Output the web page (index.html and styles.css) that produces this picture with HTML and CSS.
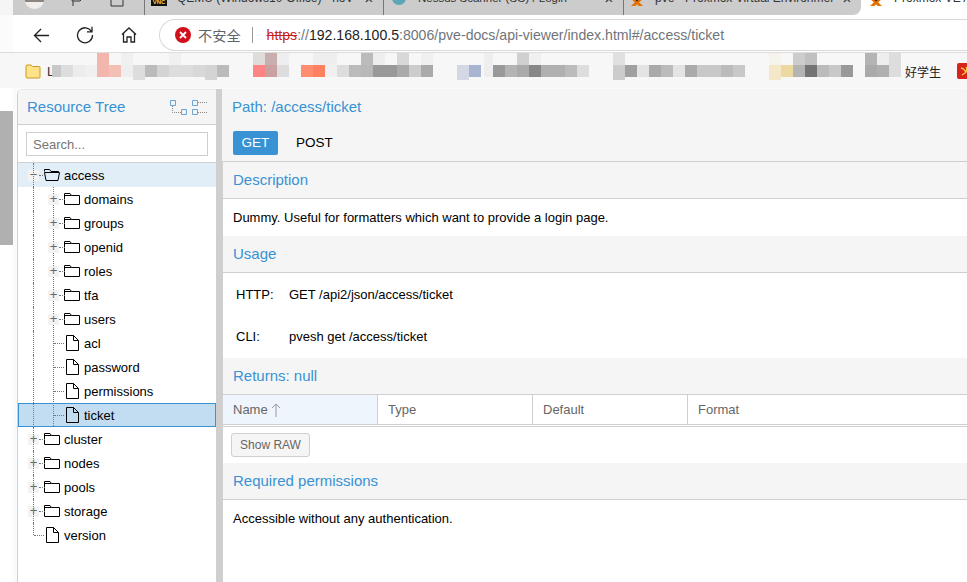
FILE: index.html
```html
<!DOCTYPE html>
<html lang="zh">
<head>
<meta charset="utf-8">
<title>Proxmox VE API Viewer</title>
<link rel="stylesheet" href="styles.css">
</head>
<body>
<svg class="defs" width="0" height="0" aria-hidden="true">
  <symbol id="folder" viewBox="0 0 16 12"><path d="M.5 11.5V.5h5.5l1.5 2h8v9z M.5 2.5h7" fill="none" stroke="#000"/></symbol>
  <symbol id="folder-open" viewBox="0 0 16 12"><path d="M.5 2.5V.5h5l1.5 2h7.5v1 M.5 3.5h15l-1.5 8H2z" fill="none" stroke="#000"/></symbol>
  <symbol id="page" viewBox="0 0 13 16"><path d="M.5.5h7l5 5v10H.5z M7.5.5v5h5" fill="none" stroke="#000"/></symbol>
</svg>

<header class="browser">
  <div class="tabstrip">
    <div class="strip-shade"></div>
    <div class="tabs">
      <span class="tab-icon avatar"></span>
      <svg class="tab-tool tool-a" viewBox="0 0 16 15"><path d="M2 0v6l4 3h7l2-2V0M6 9v5" fill="none" stroke="#333"/></svg>
      <svg class="tab-tool tool-b" viewBox="0 0 16 15"><path d="M1 5v9h12V0H4v5z" fill="none" stroke="#333"/></svg>
      <div class="tab tab-qemu"><span class="vnc">VNC</span><span class="tab-title">QEMU (Windows10-Office) - noV</span><span class="tab-x">×</span></div>
      <div class="tab tab-nessus"><span class="globe"></span><span class="tab-title">Nessus Scanner (SC) / Login</span><span class="tab-x">×</span></div>
      <div class="tab tab-pve"><svg class="px" viewBox="0 0 16 6"><path d="M-1-6 13 7M17-6 3 7" stroke="#e57000" stroke-width="3" fill="none"/><path d="M5-3l3 3 3-3" stroke="#222" stroke-width="2" fill="none"/></svg><span class="tab-title">pve - Proxmox Virtual Environmer</span><span class="tab-x">×</span></div>
      <div class="tab tab-active"><svg class="px" viewBox="0 0 16 6"><path d="M-1-6 13 7M17-6 3 7" stroke="#e57000" stroke-width="3" fill="none"/><path d="M5-3l3 3 3-3" stroke="#222" stroke-width="2" fill="none"/></svg><span class="tab-title">Proxmox VE A</span></div>
    </div>
  </div>
  <div class="toolbar">
    <svg class="tool back" viewBox="0 0 18 16"><path d="M17 8H1.500M8.500 1 1.500 8l7 7" fill="none" stroke="#222" stroke-width="1.400"/></svg>
    <svg class="tool reload" viewBox="0 0 18 18"><path d="M15.500 5.500A7.500 7.500 0 1 0 16.500 9M16 .8v5h-5" fill="none" stroke="#222" stroke-width="1.300"/></svg>
    <svg class="tool home" viewBox="0 0 16 16"><path d="M1 7.500 8 1l7 6.500M2.500 6.500v8.500H6V10h4v5h3.500V6.500" fill="none" stroke="#222" stroke-width="1.300"/></svg>
    <div class="omnibox">
      <svg class="warn" viewBox="0 0 16 16"><circle cx="8" cy="8" r="8" fill="#d20f1c"/><path d="m5 5 6 6m0-6-6 6" stroke="#fff" stroke-width="1.800"/></svg>
      <span class="insecure">不安全</span>
      <span class="sep"></span>
      <span class="url"><span class="https">https</span><span class="dim">://</span>192.168.100.5<span class="dim">:8006/pve-docs/api-viewer/index.html#/access/ticket</span></span>
    </div>
  </div>
  <div class="bookmarks">
    <svg class="bm-folder" viewBox="0 0 16 16"><path d="M1 3q0-1 1-1h4l1.500 1.500H14q1 0 1 1V14q0 1-1 1H2q-1 0-1-1z" fill="#fde28a" stroke="#c99a1e"/></svg>
    <span class="bm-letter">L</span>
    <svg class="mosaic" viewBox="0 0 967 36" width="967" height="36" aria-hidden="true">
      <g transform="translate(0,-52)">
        <rect x="52" y="65" width="9" height="12" fill="#c8c8c8"/><rect x="61" y="65" width="12" height="12" fill="#ddd"/><rect x="73" y="65" width="12" height="12" fill="#ececec"/><rect x="85" y="65" width="12" height="12" fill="#f0f0f0"/><rect x="97" y="65" width="12" height="12" fill="#f2b6ac"/><rect x="109" y="65" width="12" height="12" fill="#f4c0b4"/><rect x="121" y="65" width="12" height="12" fill="#eee"/><rect x="133" y="65" width="12" height="15" fill="#ddd"/><rect x="145" y="65" width="12" height="12" fill="#bbb"/><rect x="157" y="65" width="12" height="12" fill="#d4d4d4"/><rect x="169" y="65" width="12" height="12" fill="#ddd"/><rect x="181" y="65" width="12" height="12" fill="#ddd"/><rect x="193" y="65" width="12" height="12" fill="#d8d8d8"/><rect x="205" y="65" width="12" height="15" fill="#d4d4d4"/><rect x="217" y="65" width="12" height="12" fill="#bbb"/>
        <rect x="97" y="53" width="12" height="12" fill="#f2b6ac"/><rect x="121" y="53" width="12" height="12" fill="#f0f0f0"/><rect x="169" y="53" width="12" height="12" fill="#f0f0f0"/>
        <rect x="253" y="65" width="12" height="12" fill="#ff8585"/><rect x="265" y="65" width="12" height="12" fill="#cba0a0"/><rect x="277" y="65" width="12" height="12" fill="#ddd"/><rect x="301" y="65" width="12" height="12" fill="#ff8d70"/><rect x="313" y="65" width="12" height="12" fill="#ff8060"/><rect x="325" y="65" width="12" height="12" fill="#f0f0f0"/><rect x="337" y="65" width="12" height="12" fill="#ddd"/><rect x="349" y="65" width="12" height="12" fill="#bbb"/><rect x="361" y="65" width="12" height="12" fill="#b8b8b8"/><rect x="373" y="65" width="12" height="12" fill="#999"/><rect x="385" y="65" width="12" height="12" fill="#999"/><rect x="397" y="65" width="12" height="12" fill="#aaa"/><rect x="409" y="65" width="12" height="12" fill="#ccc"/><rect x="421" y="65" width="12" height="12" fill="#aaa"/><rect x="457" y="65" width="12" height="15" fill="#d4d8e4"/><rect x="469" y="65" width="12" height="12" fill="#a8b4d0"/>
        <rect x="253" y="53" width="12" height="12" fill="#e0dcdc"/><rect x="265" y="53" width="12" height="12" fill="#c8aeae"/><rect x="277" y="53" width="12" height="12" fill="#eee"/><rect x="313" y="53" width="24" height="12" fill="#eee"/><rect x="361" y="53" width="12" height="12" fill="#bbb"/><rect x="373" y="53" width="12" height="12" fill="#eee"/><rect x="397" y="53" width="12" height="12" fill="#d8d8d8"/><rect x="421" y="53" width="12" height="12" fill="#f0f0f0"/>
        <rect x="493" y="65" width="12" height="12" fill="#999"/><rect x="505" y="65" width="12" height="12" fill="#b4b4b4"/><rect x="517" y="65" width="12" height="12" fill="#aaa"/><rect x="529" y="65" width="12" height="12" fill="#888"/><rect x="541" y="65" width="24" height="12" fill="#b0b0b0"/><rect x="565" y="65" width="12" height="12" fill="#bbb"/><rect x="577" y="65" width="12" height="12" fill="#ddd"/>
        <rect x="484" y="53" width="9" height="24" fill="#eee"/><rect x="517" y="53" width="12" height="12" fill="#d0d0d0"/><rect x="529" y="53" width="12" height="12" fill="#f0f0f0"/>
        <rect x="613" y="53" width="12" height="12" fill="#e0e0e0"/><rect x="613" y="65" width="12" height="15" fill="#ccc"/><rect x="625" y="65" width="12" height="12" fill="#a0a0a0"/><rect x="637" y="65" width="12" height="12" fill="#e4e4e4"/><rect x="649" y="65" width="12" height="12" fill="#aaa"/><rect x="661" y="65" width="12" height="12" fill="#bbb"/><rect x="673" y="65" width="12" height="12" fill="#e4e4e4"/><rect x="685" y="65" width="12" height="12" fill="#aaa"/><rect x="697" y="65" width="24" height="12" fill="#c8c8c8"/><rect x="721" y="65" width="12" height="12" fill="#bbb"/><rect x="733" y="65" width="12" height="12" fill="#c8c8c8"/>
        <rect x="769" y="53" width="12" height="12" fill="#f6f3ea"/><rect x="769" y="65" width="12" height="15" fill="#f4e8c8"/><rect x="781" y="65" width="12" height="12" fill="#edd9a0"/><rect x="793" y="65" width="12" height="12" fill="#b4b4b4"/><rect x="805" y="65" width="12" height="12" fill="#747474"/><rect x="817" y="65" width="12" height="12" fill="#bbb"/><rect x="829" y="65" width="12" height="12" fill="#c8c8c8"/><rect x="841" y="65" width="12" height="12" fill="#999"/><rect x="793" y="53" width="12" height="12" fill="#ccc"/><rect x="805" y="53" width="12" height="12" fill="#c0c0c0"/>
        <rect x="865" y="53" width="12" height="12" fill="#b4b4b4"/><rect x="877" y="53" width="12" height="12" fill="#eee"/><rect x="889" y="53" width="12" height="12" fill="#ddd"/><rect x="865" y="65" width="12" height="12" fill="#aaa"/><rect x="877" y="65" width="12" height="12" fill="#b0b0b0"/><rect x="889" y="65" width="12" height="12" fill="#ddd"/>
      </g>
    </svg>
    <span class="bm-end">好学生</span>
    <svg class="bm-red" viewBox="0 0 14 16"><rect width="14" height="16" rx="2" fill="#d8231b"/><path d="M4 5q4 1 5 5M9 4q2 3-1 6l-3 2" fill="none" stroke="#f6c945" stroke-width="1.300"/></svg>
  </div>
</header>

<div class="viewport">
  <div class="gutter"><div class="gutter-block"></div></div>
  <main class="app">
    <aside class="tree-panel">
      <div class="tree-head">
        <h2 class="panel-title">Resource Tree</h2>
        <svg class="expand" viewBox="0 0 17 15"><path d="M.5.500h5v5h-5zM11.500 9.500h5v5h-5z" fill="none" stroke="#6aa5d8"/><path d="M2.500 6v6.500H11" fill="none" stroke="#888" stroke-dasharray="1 1"/></svg>
        <svg class="collapse" viewBox="0 0 15 15"><path d="M.5.500h5v5h-5zM.5 9.500h5v5h-5z" fill="none" stroke="#6aa5d8"/><path d="M6 2.500h9M6 12.500h9" fill="none" stroke="#888" stroke-dasharray="1 1"/></svg>
      </div>
      <div class="search-row"><input class="search" type="text" placeholder="Search..."></div>
      <ul class="tree">
        <li class="node lvl1 selected-parent"><span class="toggle">−</span><svg class="ico-folder"><use href="#folder-open"/></svg><span>access</span></li>
        <li class="node lvl2 guide"><span class="toggle">+</span><svg class="ico-folder"><use href="#folder"/></svg><span>domains</span></li>
        <li class="node lvl2 guide"><span class="toggle">+</span><svg class="ico-folder"><use href="#folder"/></svg><span>groups</span></li>
        <li class="node lvl2 guide"><span class="toggle">+</span><svg class="ico-folder"><use href="#folder"/></svg><span>openid</span></li>
        <li class="node lvl2 guide"><span class="toggle">+</span><svg class="ico-folder"><use href="#folder"/></svg><span>roles</span></li>
        <li class="node lvl2 guide"><span class="toggle">+</span><svg class="ico-folder"><use href="#folder"/></svg><span>tfa</span></li>
        <li class="node lvl2 guide"><span class="toggle">+</span><svg class="ico-folder"><use href="#folder"/></svg><span>users</span></li>
        <li class="node lvl2 guide leaf"><span class="toggle"></span><svg class="ico-page"><use href="#page"/></svg><span>acl</span></li>
        <li class="node lvl2 guide leaf"><span class="toggle"></span><svg class="ico-page"><use href="#page"/></svg><span>password</span></li>
        <li class="node lvl2 guide leaf"><span class="toggle"></span><svg class="ico-page"><use href="#page"/></svg><span>permissions</span></li>
        <li class="node lvl2 guide leaf selected last-child"><span class="toggle"></span><svg class="ico-page"><use href="#page"/></svg><span>ticket</span></li>
        <li class="node lvl1"><span class="toggle">+</span><svg class="ico-folder"><use href="#folder"/></svg><span>cluster</span></li>
        <li class="node lvl1"><span class="toggle">+</span><svg class="ico-folder"><use href="#folder"/></svg><span>nodes</span></li>
        <li class="node lvl1"><span class="toggle">+</span><svg class="ico-folder"><use href="#folder"/></svg><span>pools</span></li>
        <li class="node lvl1"><span class="toggle">+</span><svg class="ico-folder"><use href="#folder"/></svg><span>storage</span></li>
        <li class="node lvl1 leaf last"><span class="toggle"></span><svg class="ico-page"><use href="#page"/></svg><span>version</span></li>
      </ul>
    </aside>
    <div class="splitter"></div>
    <section class="detail">
      <div class="path-head">
        <h2 class="panel-title path-title">Path: /access/ticket</h2>
        <div class="method-tabs"><span class="method active">GET</span><span class="method">POST</span></div>
      </div>
      <h3 class="sec-head">Description</h3>
      <div class="sec-body desc">Dummy. Useful for formatters which want to provide a login page.</div>
      <h3 class="sec-head">Usage</h3>
      <div class="sec-body usage">
        <div class="usage-row"><span class="usage-key">HTTP:</span><span>GET /api2/json/access/ticket</span></div>
        <div class="usage-row"><span class="usage-key">CLI:</span><span>pvesh get /access/ticket</span></div>
      </div>
      <h3 class="sec-head">Returns: null</h3>
      <div class="grid-head">
        <div class="col col-sorted">Name <svg class="sort" viewBox="0 0 10 14"><path d="M5 14V1M1 5l4-4 4 4" fill="none" stroke="#999"/></svg></div>
        <div class="col">Type</div>
        <div class="col">Default</div>
        <div class="col col-last">Format</div>
      </div>
      <div class="grid-body"><button class="raw" type="button">Show RAW</button></div>
      <h3 class="sec-head">Required permissions</h3>
      <div class="sec-body perm">Accessible without any authentication.</div>
    </section>
  </main>
</div>
</body>
</html>
```
FILE: styles.css
```css
* { box-sizing: border-box; }
html, body { margin: 0; height: 100%; overflow: hidden; background: #fff; }
body { width: 967px; height: 582px; display: flex; flex-direction: column; font-family: "Liberation Sans", Arial, "Noto Sans CJK SC", sans-serif; color: #000; }
.defs { position: absolute; }
h2, h3, ul { margin: 0; padding: 0; font-weight: 400; }
ul { list-style: none; }

.browser { flex: none; height: 88px; display: flex; flex-direction: column; }
.tabstrip { height: 15px; display: flex; overflow: hidden; }
.strip-shade { width: 13px; background: #f5f5f5; flex: none; }
.tabs { flex: 1; background: #cccccc; position: relative; font-size: 12px; color: #333; }
.tab-icon { position: absolute; }
.avatar { left: 12px; top: -8px; width: 19px; height: 17px; border-radius: 50%; background: linear-gradient(#8d857d 60%, #f0eeec 60%); }
.tab-tool { position: absolute; top: -8px; width: 16px; height: 15px; }
.tool-a { left: 54px; }
.tool-b { left: 97px; }
.tab { position: absolute; top: -9px; height: 24px; display: flex; align-items: flex-start; white-space: nowrap; overflow: hidden; line-height: 15px; }
.tab-qemu { left: 131px; width: 239px; border-left: 1px solid #777; }
.tab-nessus { left: 370px; width: 240px; border-left: 1px solid #777; font-size: 11.500px; }
.tab-pve { left: 610px; width: 238px; padding-left: 5px; border-left: 1px solid #777; background: #ccc; border-radius: 0 0 8px 0; z-index: 1; }
.tab-active { left: 820px; width: 134px; background: #fff; padding-left: 35px; }
.vnc { width: 16px; height: 15px; margin: 0 10px 0 6px; background: #111; color: #f0d040; font-size: 6px; font-weight: 700; line-height: 23px; text-align: center; flex: none; }
.globe { width: 14px; height: 14px; margin: 0 12px 0 8px; border-radius: 50%; background: #5aa7b5; flex: none; }
.px { width: 16px; height: 6px; margin: 9px 10px 0 0; flex: none; }
.tab-title { flex: 1; overflow: hidden; min-width: 0; }
.tab-x { width: 18px; font-size: 15px; text-align: center; flex: none; margin-right: 5px; }
.tab-active .tab-title { flex: none; }

.toolbar { height: 37px; padding-top: 3px; background: #fff; display: flex; align-items: center; border-left: 13px solid #fbfbfb; }
.tool { flex: none; }
.back { width: 17px; height: 15px; margin-left: 20px; }
.reload { width: 18px; height: 18px; margin-left: 26px; }
.home { width: 16px; height: 16px; margin-left: 27px; }
.omnibox { flex: 1; height: 32px; margin-left: 22px; border: 1px solid #d8d8d8; border-right: 0; border-radius: 16px 0 0 16px; display: flex; align-items: center; white-space: nowrap; overflow: hidden; }
.warn { width: 16px; height: 16px; margin-left: 15px; flex: none; }
.insecure { margin-left: 7px; color: #5f6368; font-size: 14.200px; }
.sep { width: 1px; height: 16px; background: #999; margin: 0 14px 0 11px; }
.url { color: #222; font-size: 14.100px; }
.https { color: #c5221f; text-decoration: line-through; }
.dim { color: #70757a; }

.bookmarks { height: 36px; background: #f7f7f7; border-top: 1px solid #dcdcdc; position: relative; overflow: hidden; }
.bm-folder { width: 16px; height: 16px; position: absolute; left: 25px; top: 10px; }
.bm-letter { position: absolute; left: 47px; top: 11px; font-size: 13px; color: #333; }
.mosaic { position: absolute; left: 0; top: -1px; }
.bm-end { position: absolute; left: 905px; top: 10px; font-size: 12px; color: #222; }
.bm-red { position: absolute; left: 957px; top: 10px; width: 14px; height: 16px; }

.viewport { flex: 1; display: flex; min-height: 0; }
.gutter { width: 13px; flex: none; background: #fff; padding-top: 23px; }
.gutter-block { height: 134px; background: #b0b0b0; }
.app { flex: 1; display: flex; min-width: 0; padding: 1px 0 0 4px; background: #fafafa; }

.tree-panel { width: 199px; flex: none; display: flex; flex-direction: column; background: #fff; border-left: 1px solid #d0d0d0; border-radius: 6px 0 0 0; overflow: hidden; }
.tree-head { height: 36px; flex: none; background: #f5f5f5; border-bottom: 1px solid #cfcfcf; border-top: 1px solid #e8e8e8; display: flex; align-items: center; padding: 0 9px; }
.panel-title { font-size: 15px; color: #3892d4; line-height: 18px; }
.expand { width: 17px; height: 15px; margin-left: auto; flex: none; }
.collapse { width: 15px; height: 15px; margin-left: 5px; flex: none; }
.search-row { padding: 7px 8px 0; flex: none; height: 38px; border-bottom: 1px solid #d0d0d0; }
.search { display: block; width: 182px; height: 24px; border: 1px solid #cfcfcf; padding: 0 6px; font: 13px "Liberation Sans", Arial, sans-serif; color: #333; outline: 0; background: #fff; }
.search::placeholder { color: #757575; opacity: 1; }

.tree { flex: 1; font-size: 13px; overflow: hidden; }
.node { height: 24px; display: flex; align-items: center; position: relative; color: #000; }
.lvl1 { padding-left: 10px; }
.lvl2 { padding-left: 30px; }
.toggle { width: 11px; height: 11px; margin-right: 5px; background: #f3f3f3; font-size: 13px; line-height: 10px; text-align: center; color: #666; flex: none; }
.leaf .toggle { background: none; }
.ico-folder { width: 16px; height: 12px; margin-right: 4px; flex: none; }
.ico-page { width: 13px; height: 16px; margin: 0 5px 0 2px; flex: none; }
.node::before { content: ""; position: absolute; left: 15px; top: 0; bottom: 0; border-left: 1px dotted #777; }
.node.last::before { bottom: 12px; }
.node::after { content: ""; position: absolute; top: 12px; width: 6px; border-top: 1px dotted #777; }
.lvl1::after { left: 21px; }
.lvl2::after { left: 41px; }
.leaf.lvl1::after { left: 16px; width: 10px; }
.leaf.lvl2::after { left: 36px; width: 10px; }
.guide { background-image: linear-gradient(#777 50%, transparent 50%); background-size: 1px 2px; background-repeat: repeat-y; background-position: 35px 0; }
.guide.last-child { background-image: linear-gradient(#777 50%, transparent 50%), linear-gradient(#c2dcf2, #c2dcf2); background-position: 35px 0, 0 0; background-size: 1px 2px, 100% 100%; background-repeat: repeat-y, no-repeat; }
.selected-parent { background-color: #e1edf7; }
.selected { outline: 1px solid #3892d4; outline-offset: -1px; background-color: #c2dcf2; }

.splitter { width: 7px; flex: none; background: #cfcfcf; }
.detail { flex: 1; min-width: 0; background: #fff; display: flex; flex-direction: column; }
.path-head { height: 73px; flex: none; background: #f5f5f5; border-bottom: 1px solid #cfcfcf; padding: 9px 0 0 10px; margin-left: -1px; }
.path-title { margin-bottom: 15px; }
.method-tabs { display: flex; font-size: 13.500px; margin-left: 1px; }
.method { width: 45px; height: 24px; line-height: 23px; text-align: center; color: #000; border-radius: 2px; margin-right: 14px; }
.method.active { background: #3892d4; color: #fff; }
.sec-head { height: 37px; flex: none; background: #f5f5f5; border-bottom: 1px solid #cfcfcf; font-size: 15px; color: #3892d4; line-height: 36px; padding-left: 10px; }
.sec-body { font-size: 13px; padding-left: 10px; flex: none; }
.desc { height: 37px; line-height: 37px; }
.usage { height: 85px; padding: 0 0 0 13px; }
.usage-row { height: 42px; display: flex; align-items: center; }
.usage-key { width: 53px; }
.grid-head { height: 30px; flex: none; display: flex; border-bottom: 1px solid #cfcfcf; font-size: 13px; color: #666; }
.col { width: 155px; padding-left: 10px; line-height: 29px; border-right: 1px solid #cfcfcf; flex: none; }
.col-sorted { background: #eef5fc; }
.col-last { flex: 1; border-right: 0; }
.sort { width: 10px; height: 14px; vertical-align: -3px; }
.grid-body { height: 37px; flex: none; border-top: 1px solid #cfcfcf; margin-top: 1px; padding: 6px 0 0 8px; }
.raw { display: block; width: 79px; height: 24px; background: #f5f5f5; border: 1px solid #cfcfcf; border-radius: 3px; padding: 0; font: 12px "Liberation Sans", Arial, sans-serif; color: #666; }
.perm { padding: 11px 0 0 10px; }
```
